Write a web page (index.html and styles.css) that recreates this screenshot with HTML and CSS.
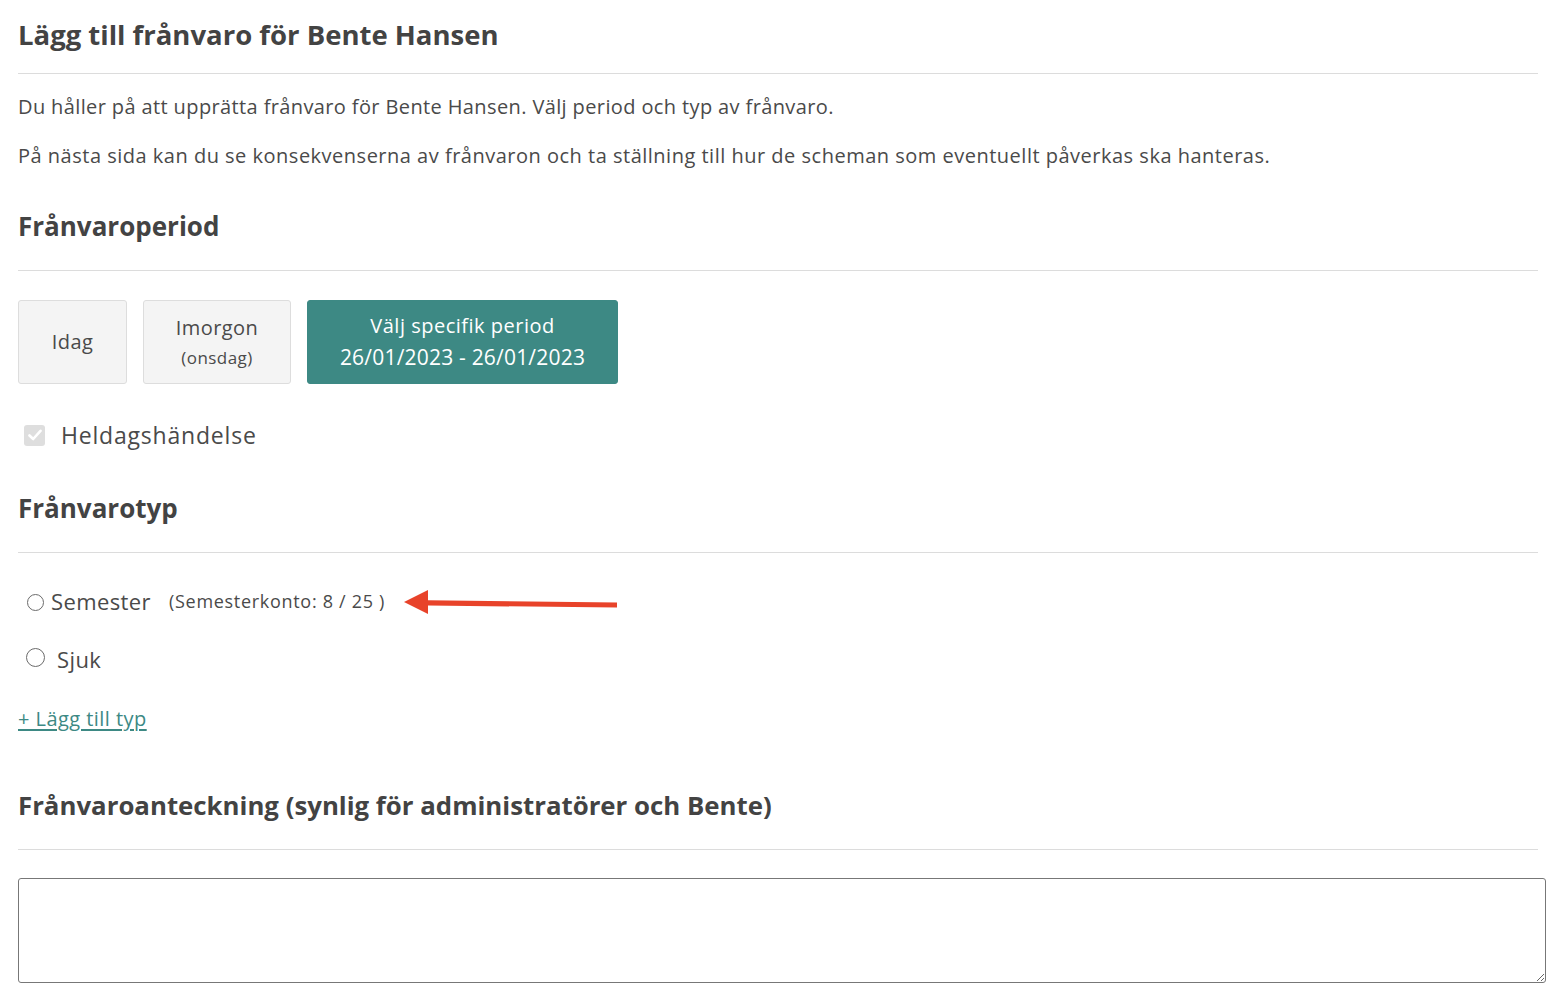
FILE: index.html
```html
<!DOCTYPE html>
<html lang="sv">
<head>
<meta charset="utf-8">
<title>Lägg till frånvaro</title>
<link rel="stylesheet" href="styles.css">
</head>
<body>
<div class="page">
  <h1 class="title">Lägg till frånvaro för Bente Hansen</h1>
  <p class="intro first">Du håller på att upprätta frånvaro för Bente Hansen. Välj period och typ av frånvaro.</p>
  <p class="intro second">På nästa sida kan du se konsekvenserna av frånvaron och ta ställning till hur de scheman som eventuellt påverkas ska hanteras.</p>

  <h2 class="section">Frånvaroperiod</h2>
  <div class="period-buttons">
    <button class="pbtn pbtn-idag">Idag</button>
    <button class="pbtn pbtn-imorgon"><span class="pb-main">Imorgon</span><span class="pb-sub">(onsdag)</span></button>
    <button class="pbtn pbtn-active"><span class="pb-main">Välj specifik period</span><span class="pb-date">26/01/2023 - 26/01/2023</span></button>
  </div>
  <label class="allday">
    <span class="fake-check"><svg width="14" height="12" viewBox="0 0 14 12"><path d="M1.5 6.5 L5.2 10 L12.5 1.8" fill="none" stroke="#fff" stroke-width="2.6" stroke-linecap="round" stroke-linejoin="round"/></svg></span>
    <span class="allday-label">Heldagshändelse</span>
  </label>

  <h2 class="section section-type">Frånvarotyp</h2>
  <div class="radio-row row-sem">
    <span class="radio radio-small"></span>
    <span class="radio-label">Semester</span>
    <span class="konto">(Semesterkonto: 8 / 25 )</span>
    <svg class="arrow" width="216" height="28" viewBox="0 0 216 28">
      <path d="M24 12.2 L213 14.6 L213 19.4 L24 17.6 Z" fill="#e8432a"/>
      <path d="M0 14 L24 2 L24 26 Z" fill="#e8432a"/>
    </svg>
  </div>
  <div class="radio-row row-sjuk">
    <span class="radio radio-big"></span>
    <span class="radio-label sjuk">Sjuk</span>
  </div>
  <a class="add-type" href="#">+ Lägg till typ</a>

  <h2 class="section section-note">Frånvaroanteckning (synlig för administratörer och Bente)</h2>
  <textarea class="note"></textarea>
</div>
</body>
</html>
```

FILE: styles.css
```css
* { box-sizing: border-box; }
html, body { margin: 0; padding: 0; background: #fff; }
body {
  font-family: "Open Sans", "Liberation Sans", sans-serif;
  color: #4a4a4a;
}
.page {
  padding: 18px 22px 0 18px;
  width: 1560px;
}
.title {
  margin: 0;
  font-size: 27.5px;
  line-height: 34px;
  font-weight: 700;
  color: #434343;
  padding-bottom: 21px;
  border-bottom: 1px solid #dcdcdc;
}
.intro {
  margin: 0;
  font-size: 20px;
  line-height: 30px;
  color: #4a4a4a;
}
.intro.first { margin-top: 18px; letter-spacing: 0.38px; }
.intro.second { margin-top: 19px; letter-spacing: 0.5px; }
.section {
  margin: 39px 0 0 0;
  font-size: 26px;
  line-height: 32px;
  font-weight: 700;
  color: #434343;
  padding-bottom: 28px;
  border-bottom: 1px solid #dcdcdc;
}
.period-buttons {
  display: flex;
  gap: 16px;
  margin-top: 29px;
  height: 84px;
}
.pbtn {
  font-family: inherit;
  border: 1px solid #dddddd;
  background: #f4f4f4;
  border-radius: 3px;
  color: #4a4a4a;
  font-size: 20px;
  letter-spacing: 0.45px;
  display: flex;
  flex-direction: column;
  align-items: center;
  justify-content: center;
  padding: 0;
  cursor: pointer;
}
.pbtn-idag { width: 109px; padding-bottom: 1px; }
.pbtn-imorgon { width: 148px; padding-top: 2px; }
.pb-main { line-height: 30px; }
.pb-sub { font-size: 17px; line-height: 30px; }
.pbtn-active {
  width: 311px;
  background: #3d8984;
  border-color: #3d8984;
  color: #fff;
  letter-spacing: 0.5px;
}
.pbtn-active .pb-main { line-height: 30px; }
.pb-date { font-size: 21px; line-height: 32px; letter-spacing: 0.2px; }
.allday {
  display: flex;
  align-items: center;
  margin-top: 36px;
  height: 30px;
}
.fake-check {
  width: 21px;
  height: 21px;
  margin-left: 6px;
  background: #dedede;
  border-radius: 3px;
  display: flex;
  align-items: center;
  justify-content: center;
}
.allday-label {
  margin-left: 16px;
  font-size: 23px;
  letter-spacing: 0.8px;
  color: #4a4a4a;
}
.section-type { margin-top: 42px; }
.radio-row {
  display: flex;
  align-items: center;
  height: 30px;
}
.row-sem { margin-top: 33px; }
.row-sjuk { margin-top: 28px; }
.radio {
  display: inline-block;
  border: 1.3px solid #6b6b6b;
  border-radius: 50%;
  background: #fff;
}
.radio-small { width: 17px; height: 17px; margin-left: 9px; margin-top: 2px; }
.radio-big { width: 19px; height: 19px; margin-left: 8px; margin-top: -4px; }
.radio-label {
  font-size: 22px;
  letter-spacing: 0.4px;
  margin-left: 7px;
  color: #4a4a4a;
}
.radio-label.sjuk { margin-left: 12px; margin-top: 0; }
.konto {
  font-size: 18px;
  letter-spacing: 0.7px;
  margin-left: 18px;
  color: #4a4a4a;
}
.arrow { margin-left: 19px; margin-top: 2px; }
.add-type {
  display: inline-block;
  margin-top: 30px;
  font-size: 20px;
  letter-spacing: 0.45px;
  line-height: 30px;
  color: #3d8984;
  text-decoration: underline;
  text-underline-offset: 3px;
}
.section-note { margin-top: 55px; font-size: 25.8px; }
.note {
  display: block;
  margin-top: 28px;
  width: 1528px;
  height: 105px;
  border: 1px solid #777;
  border-radius: 3px;
  resize: vertical;
  font-family: inherit;
}
```
